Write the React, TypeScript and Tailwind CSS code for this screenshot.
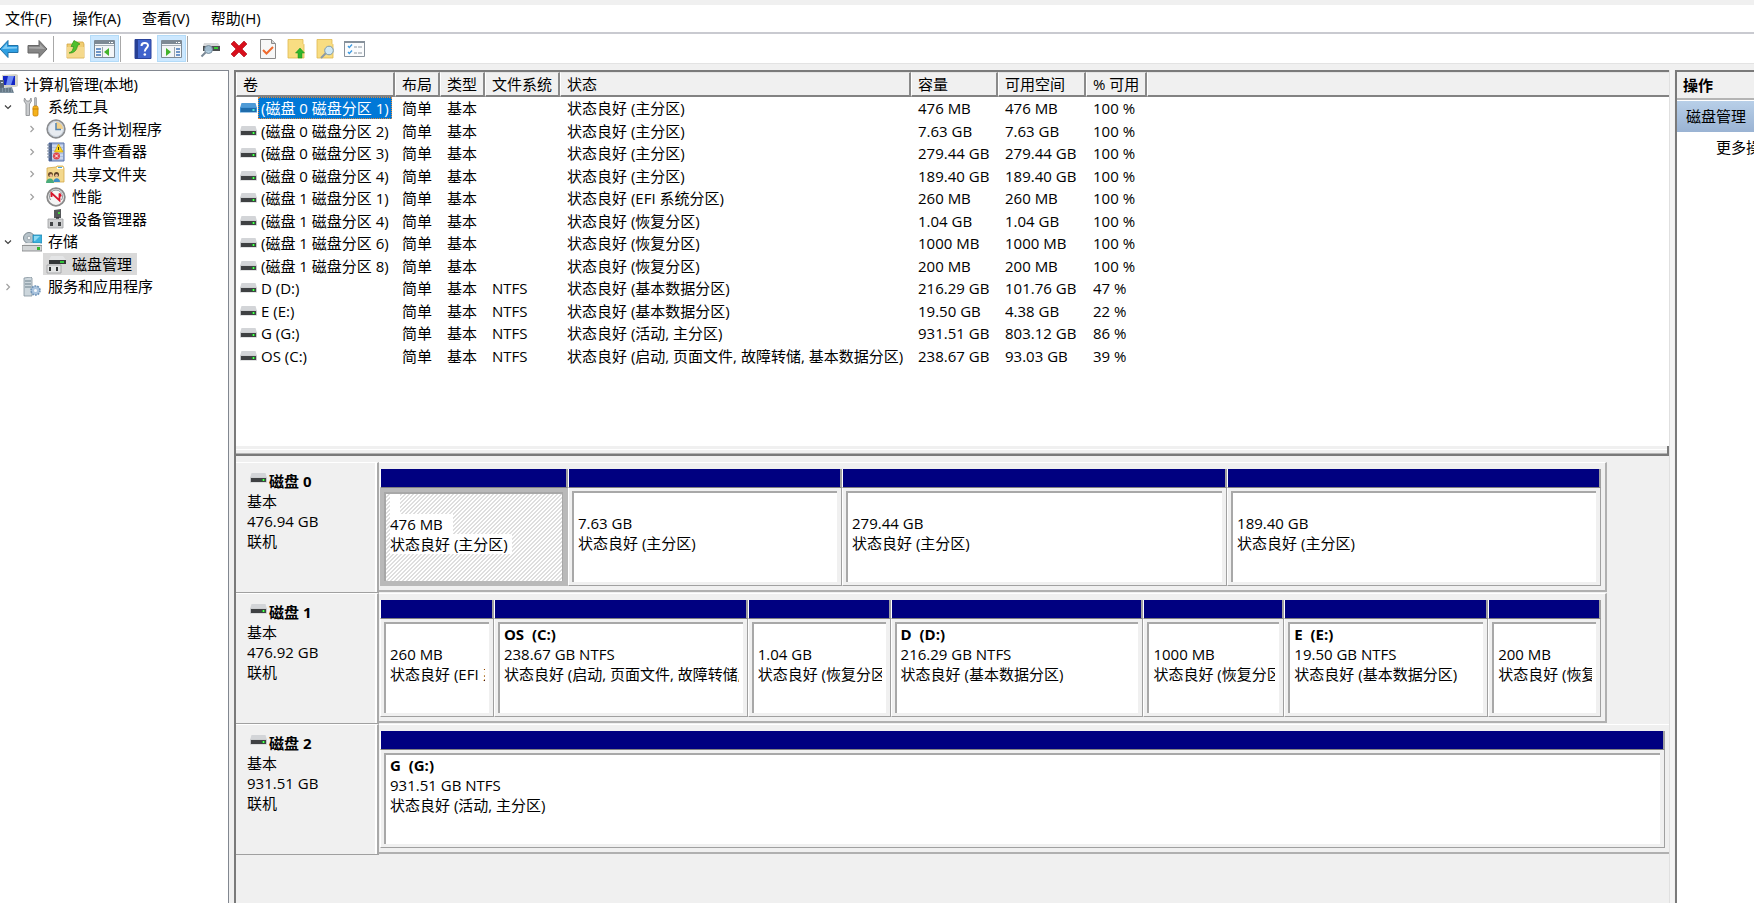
import React from 'react';

interface IVolume {
    name: string;
    fs?: string;
    status: string;
    size: string;
    free: string;
    percent: string;
}

interface IPartition {
    name?: string;
    size: string;
    status: string;
    weight: number;
    selected?: boolean;
}

interface IDisk {
    name: string;
    size: string;
    width: number;
    partitions: IPartition[];
}

interface ITreeItem {
    label: string;
    level: number;
    icon: React.ReactNode;
    arrow?: 'open' | 'closed';
    selected?: boolean;
}

const volumes: IVolume[] = [
    { name: '(磁盘 0 磁盘分区 1)', status: '状态良好 (主分区)', size: '476 MB', free: '476 MB', percent: '100 %' },
    { name: '(磁盘 0 磁盘分区 2)', status: '状态良好 (主分区)', size: '7.63 GB', free: '7.63 GB', percent: '100 %' },
    { name: '(磁盘 0 磁盘分区 3)', status: '状态良好 (主分区)', size: '279.44 GB', free: '279.44 GB', percent: '100 %' },
    { name: '(磁盘 0 磁盘分区 4)', status: '状态良好 (主分区)', size: '189.40 GB', free: '189.40 GB', percent: '100 %' },
    { name: '(磁盘 1 磁盘分区 1)', status: '状态良好 (EFI 系统分区)', size: '260 MB', free: '260 MB', percent: '100 %' },
    { name: '(磁盘 1 磁盘分区 4)', status: '状态良好 (恢复分区)', size: '1.04 GB', free: '1.04 GB', percent: '100 %' },
    { name: '(磁盘 1 磁盘分区 6)', status: '状态良好 (恢复分区)', size: '1000 MB', free: '1000 MB', percent: '100 %' },
    { name: '(磁盘 1 磁盘分区 8)', status: '状态良好 (恢复分区)', size: '200 MB', free: '200 MB', percent: '100 %' },
    { name: 'D (D:)', fs: 'NTFS', status: '状态良好 (基本数据分区)', size: '216.29 GB', free: '101.76 GB', percent: '47 %' },
    { name: 'E (E:)', fs: 'NTFS', status: '状态良好 (基本数据分区)', size: '19.50 GB', free: '4.38 GB', percent: '22 %' },
    { name: 'G (G:)', fs: 'NTFS', status: '状态良好 (活动, 主分区)', size: '931.51 GB', free: '803.12 GB', percent: '86 %' },
    { name: 'OS (C:)', fs: 'NTFS', status: '状态良好 (启动, 页面文件, 故障转储, 基本数据分区)', size: '238.67 GB', free: '93.03 GB', percent: '39 %' },
];

const disks: IDisk[] = [
    {
        name: '磁盘 0',
        size: '476.94 GB',
        width: 95.2,
        partitions: [
            { size: '476 MB', status: '状态良好 (主分区)', weight: 188, selected: true },
            { size: '7.63 GB', status: '状态良好 (主分区)', weight: 274 },
            { size: '279.44 GB', status: '状态良好 (主分区)', weight: 385 },
            { size: '189.40 GB', status: '状态良好 (主分区)', weight: 374 },
        ],
    },
    {
        name: '磁盘 1',
        size: '476.92 GB',
        width: 95.2,
        partitions: [
            { size: '260 MB', status: '状态良好 (EFI 系统分区)', weight: 114 },
            { name: 'OS  (C:)', size: '238.67 GB NTFS', status: '状态良好 (启动, 页面文件, 故障转储, 基本数据分区)', weight: 254 },
            { size: '1.04 GB', status: '状态良好 (恢复分区)', weight: 143 },
            { name: 'D  (D:)', size: '216.29 GB NTFS', status: '状态良好 (基本数据分区)', weight: 253 },
            { size: '1000 MB', status: '状态良好 (恢复分区)', weight: 141 },
            { name: 'E  (E:)', size: '19.50 GB NTFS', status: '状态良好 (基本数据分区)', weight: 204 },
            { size: '200 MB', status: '状态良好 (恢复分区)', weight: 113 },
        ],
    },
    {
        name: '磁盘 2',
        size: '931.51 GB',
        width: 100,
        partitions: [{ name: 'G  (G:)', size: '931.51 GB NTFS', status: '状态良好 (活动, 主分区)', weight: 1 }],
    },
];

const DriveIcon = ({ active }: { active?: boolean }) => (
    <svg width="17" height="10" viewBox="0 0 17 10" className="shrink-0">
        <path d="M1.500 0h14l1.500 5H0z" fill={active ? '#4f9bd6' : '#d3d5d8'} />
        <path d="M0 4.500h17V9.500H0z" fill={active ? '#3c8fd2' : '#c4c6c9'} />
        <path d="M1 5h15v4H1z" fill={active ? '#1f6cab' : '#3f4143'} />
        <path d="M12 6h3v2h-3z" fill={active ? '#2fb5c0' : '#1fa32c'} />
        <path d="M13 6h1v2h-1z" fill={active ? '#5fe0e0' : '#5dff5a'} />
    </svg>
);

const ComputerIcon = () => (
    <svg width="18" height="20" viewBox="0 0 18 20">
        <path d="M2 1l14-1 2 1v11l-2 1H3z" fill="#d4d3c8" />
        <path d="M3 2h12v9H3z" fill="#1426c4" />
        <path d="M8 2h6l-3 9H6z" fill="#6f8cf5" />
        <path d="M0 6h4v8H0z" fill="#596673" />
        <path d="M1 8h2v1H1z" fill="#d6e4ee" />
        <path d="M0 14l12-1 2 6H0z" fill="#8295a3" />
        <path d="M0 15h12M0 17h13" stroke="#4d5f6d" strokeDasharray="2 1" />
    </svg>
);

const ToolsIcon = () => (
    <svg width="20" height="20" viewBox="0 0 20 20">
        <path d="M2.500 1L2 4l2 3v11.500h3.500V7l2-3-.5-3-1.500 3h-3z" fill="#c9cbcd" stroke="#85888b" strokeWidth=".8" />
        <path d="M12.500 1l1-1 1 1v8h-2z" fill="#b9bcbf" stroke="#84888b" strokeWidth=".6" />
        <rect x="11" y="9" width="5" height="10" rx="1.500" fill="#f4b21c" stroke="#c98206" strokeWidth=".8" />
        <path d="M10.500 12h6" stroke="#c98206" />
    </svg>
);

const ClockIcon = () => (
    <svg width="20" height="20" viewBox="0 0 20 20">
        <circle cx="10" cy="10" r="8.800" fill="#e7ebf0" stroke="#8b8d90" strokeWidth="1.800" />
        <path d="M10 10V2.500a7.500 7.500 0 0 1 7.500 7.500z" fill="#f2d08a" />
        <circle cx="10" cy="10" r="7.500" fill="none" stroke="#c9d2dc" />
        <path d="M10 4v6.500h5" fill="none" stroke="#5383ae" strokeWidth="1.500" />
    </svg>
);

const EventIcon = () => (
    <svg width="20" height="20" viewBox="0 0 20 20">
        <path d="M3 1h15v18H3z" fill="#aebfe0" stroke="#5471ab" />
        <path d="M5 4h12M5 7h12M5 10h12M5 13h12M5 16h12" stroke="#e8effb" />
        <path d="M3 1h3v18H3z" fill="#4a6290" />
        <path d="M1 3h3M1 6h3M1 9h3M1 12h3M1 15h3" stroke="#7d8897" />
        <path d="M12.500 2l4.500 8H8.500z" fill="#ffd91f" stroke="#d0a307" strokeWidth=".8" />
        <path d="M12.500 5v3" stroke="#4a3b00" />
        <circle cx="10.500" cy="14" r="3.500" fill="#e0454d" />
        <path d="M9 12.500l3 3M12 12.500l-3 3" stroke="#fff" />
    </svg>
);

const SharedIcon = () => (
    <svg width="20" height="20" viewBox="0 0 20 20">
        <path d="M1 4l9-1 1-1h6l1 2v14H1z" fill="#f3d88d" stroke="#d3a949" strokeWidth=".8" />
        <path d="M11 3h6v2h-6z" fill="#fff" />
        <path d="M12 3.500h4" stroke="#49a5db" />
        <circle cx="4.500" cy="10.500" r="2.500" fill="#6d4c2c" />
        <circle cx="10.500" cy="10.500" r="2.500" fill="#5b4228" />
        <circle cx="5" cy="11.500" r="1.500" fill="#eec09a" />
        <circle cx="10.500" cy="11.500" r="1.500" fill="#eec09a" />
        <path d="M0 19c0-6 8-6 8 0z" fill="#49ac7b" />
        <path d="M7.500 18c0-5 6.500-5 6.500 0z" fill="#3d8fc7" />
    </svg>
);

const PerfIcon = () => (
    <svg width="20" height="20" viewBox="0 0 20 20">
        <circle cx="10" cy="10" r="8.800" fill="#f4f4f4" stroke="#8a8a8a" strokeWidth="1.800" />
        <path d="M4.500 13a6.500 6.500 0 1 1 11 0" fill="none" stroke="#8b9195" />
        <path d="M5.500 10V6l8 7.500V6.500l1.500 3" fill="none" stroke="#d7142a" strokeWidth="1.800" />
    </svg>
);

const DeviceIcon = () => (
    <svg width="20" height="20" viewBox="0 0 20 20">
        <path d="M8 1l7-1v9H8z" fill="#55585a" />
        <path d="M12 3h2v2h-2z" fill="#46d33f" />
        <path d="M10 8h3v4h-3z" fill="#3a3c3e" />
        <path d="M2 10h15v9H2z" fill="#d2d3d4" stroke="#9a9c9e" strokeWidth=".8" />
        <path d="M4 13h3v4H4zM12 13h3v4h-3z" fill="#434547" />
    </svg>
);

const StorageIcon = () => (
    <svg width="20" height="20" viewBox="0 0 20 20">
        <circle cx="7" cy="6" r="5.500" fill="#b7c3ca" stroke="#7e8b93" />
        <circle cx="7" cy="6" r="1.800" fill="#f2f5f6" stroke="#7e8b93" strokeWidth=".6" />
        <path d="M11 3h9v8h-9z" fill="#3db1dd" stroke="#2286b3" strokeWidth=".8" />
        <path d="M12 4h6l-5 5h-1z" fill="#8cd9f3" />
        <path d="M3 11h15l2 3H0z" fill="#eceded" />
        <path d="M0 13.500h20V19H0z" fill="#d2d5d6" stroke="#7c7f80" strokeWidth=".8" />
        <path d="M15 15h3v3h-3z" fill="#34b32c" />
    </svg>
);

const DiskMgmtIcon = () => (
    <svg width="20" height="20" viewBox="0 0 20 20">
        <path d="M5 2h12l3 4H3z" fill="#e4e5e6" />
        <path d="M3 6h17v4H3z" fill="#343637" />
        <path d="M14 7h4v2h-4z" fill="#31c43a" />
        <path d="M1 11h14v8H1z" fill="#e2e3e3" stroke="#9c9d9e" strokeWidth=".8" />
        <path d="M3 13h2v4H3zM10 13h2v4h-2z" fill="#333536" />
    </svg>
);

const ServicesIcon = () => (
    <svg width="20" height="20" viewBox="0 0 20 20">
        <path d="M2 1l7-1 1 1v18H2z" fill="#ccd6dc" stroke="#83929c" strokeWidth=".8" />
        <path d="M3 4h6M3 7h6M3 10h6" stroke="#6d808c" />
        <circle cx="13.500" cy="13.500" r="4.500" fill="#a9c3de" stroke="#6f94b8" strokeWidth="1.600" strokeDasharray="1.800 1" />
        <circle cx="13.500" cy="13.500" r="1.500" fill="#f7fafc" />
    </svg>
);

const BackIcon = () => (
    <svg width="19" height="20" viewBox="0 0 19 20">
        <path d="M0 10l8-8.500v5h10v7H8v5z" fill="#2f9fe2" stroke="#2172a8" />
        <path d="M2 10l5-5.500V8h10v1.500z" fill="#7fccf5" />
    </svg>
);

const ForwardIcon = () => (
    <svg width="21" height="20" viewBox="0 0 21 20">
        <path d="M20 10l-8-8.500v5H1V14h11v4.500z" fill="#858585" stroke="#676767" />
        <path d="M18 10l-5-5v3H2v1.500z" fill="#a8a8a8" />
    </svg>
);

const FolderUpIcon = () => (
    <svg width="20" height="20" viewBox="0 0 20 20">
        <path d="M1 5h8l1-2h7l1 2v14H1z" fill="#f0cd72" stroke="#d2a541" strokeWidth=".8" />
        <path d="M1 8h17v10.500H1z" fill="#f5d98c" />
        <path d="M3 14c3-1 4-3 4.500-6.500H5l3-6 6 3.500-2.500 1.500C11 11 8 14.500 3 14z" fill="#4fc02d" stroke="#2f941a" strokeWidth=".7" />
    </svg>
);

const WindowIcon = ({ right }: { right?: boolean }) => (
    <svg width="21" height="18" viewBox="0 0 21 18">
        <path d="M.5.5h20v17H.5z" fill="#f4f6f8" stroke="#7e8a95" />
        <path d="M1 1h19v3H1z" fill="#7d8994" />
        <path d="M15 2.500h1M17 2.500h2" stroke="#fff" />
        <path d="M1 5.500h19" stroke="#a8b0b8" />
        <path d={right ? 'M13.500 7v10' : 'M8.500 7v10'} stroke="#9aa4ad" />
        <path d={right ? 'M15 9h4M15 12h4M15 15h4' : 'M2 9h5M2 12h5M2 15h5'} stroke="#4177b8" strokeWidth="1.300" />
        <path d={right ? 'M5 8l5 4-5 4z' : 'M15 8l-5 4 5 4z'} fill="#43b32a" />
    </svg>
);

const HelpIcon = () => (
    <svg width="18" height="20" viewBox="0 0 18 20">
        <path d="M1 .5h16v19H1z" fill="#3f63cc" stroke="#2a439c" />
        <path d="M1 .5h3v19H1z" fill="#263f94" />
        <path d="M7.500 7c0-4 6.500-4 6.500-.5 0 2.500-3.200 2.500-3.200 6" fill="none" stroke="#fff" strokeWidth="2" />
        <circle cx="10.800" cy="15.500" r="1.300" fill="#fff" />
    </svg>
);

const RescanIcon = () => (
    <svg width="20" height="20" viewBox="0 0 20 20">
        <path d="M4 4h14l2 3H3z" fill="#d5d7d9" />
        <path d="M3 7h17v5H3z" fill="#4b4e50" />
        <path d="M14 8h4v2h-4z" fill="#38c936" />
        <circle cx="8.500" cy="10.500" r="4" fill="#a9c6da" fillOpacity=".9" stroke="#778b9a" />
        <path d="M5.500 13.500l-4 4" stroke="#7a8794" strokeWidth="2" />
    </svg>
);

const DeleteIcon = () => (
    <svg width="18" height="18" viewBox="0 0 18 18">
        <path d="M4 1l5 5 5-5 3 3-5 5 5 5-3 3-5-5-5 5-3-3 5-5-5-5z" fill="#d80f1c" stroke="#a80812" strokeWidth=".6" />
    </svg>
);

const CheckDocIcon = () => (
    <svg width="16" height="20" viewBox="0 0 16 20">
        <path d="M.5.5h11l4 4v15H.5z" fill="#f7f7f7" stroke="#8b8b8b" />
        <path d="M11.500.5v4h4" fill="#d5d5d5" stroke="#8b8b8b" />
        <path d="M3 11l3.500 3.500L13 8" fill="none" stroke="#ef6a2d" strokeWidth="2" />
    </svg>
);

const NoteIcon = ({ search }: { search?: boolean }) => (
    <svg width="19" height="20" viewBox="0 0 19 20">
        <path d="M1 .5h15v4l1 1v13.500H1z" fill="#f8dd82" stroke="#dfb94f" strokeWidth=".8" />
        {search ? (
            <>
                <path d="M10 14l-5 5" stroke="#8b99a5" strokeWidth="2" />
                <circle cx="13" cy="11.500" r="4.300" fill="#cfe8f4" stroke="#7d9aae" />
            </>
        ) : (
            <path d="M13 9l4.500 5H15v5h-4v-5H8.500z" fill="#2eb52c" stroke="#149018" strokeWidth=".5" />
        )}
    </svg>
);

const ListIcon = () => (
    <svg width="21" height="16" viewBox="0 0 21 16">
        <path d="M.5.500h20v15H.5z" fill="#fbfcfd" stroke="#87919b" />
        <path d="M0 0h21v2H0z" fill="#87919b" />
        <path d="M4 5l1.300 1.500L8 3.500M4 11l1.300 1.500L8 9.500" fill="none" stroke="#3e9ae0" strokeWidth="1.300" />
        <path d="M10 6h3M14 6h4M10 12h3M14 12h4" stroke="#8c97a2" />
    </svg>
);

const tree: ITreeItem[] = [
    { label: '计算机管理(本地)', level: 0, icon: <ComputerIcon /> },
    { label: '系统工具', level: 1, icon: <ToolsIcon />, arrow: 'open' },
    { label: '任务计划程序', level: 2, icon: <ClockIcon />, arrow: 'closed' },
    { label: '事件查看器', level: 2, icon: <EventIcon />, arrow: 'closed' },
    { label: '共享文件夹', level: 2, icon: <SharedIcon />, arrow: 'closed' },
    { label: '性能', level: 2, icon: <PerfIcon />, arrow: 'closed' },
    { label: '设备管理器', level: 2, icon: <DeviceIcon /> },
    { label: '存储', level: 1, icon: <StorageIcon />, arrow: 'open' },
    { label: '磁盘管理', level: 2, icon: <DiskMgmtIcon />, selected: true },
    { label: '服务和应用程序', level: 1, icon: <ServicesIcon />, arrow: 'closed' },
];

const Arrow = ({ type }: { type?: 'open' | 'closed' }) => {
    if (!type) return <span className="w-4 shrink-0" />;
    return (
        <button type="button" aria-label={type === 'open' ? '折叠' : '展开'} className="flex w-4 shrink-0 justify-center">
            <svg width="8" height="8" viewBox="0 0 8 8" fill="none">
                {type === 'open' ? (
                    <path d="M1 2.500l3 3 3-3" stroke="#404040" strokeWidth="1.200" />
                ) : (
                    <path d="M2.500 1l3 3-3 3" stroke="#a0a0a0" strokeWidth="1.200" />
                )}
            </svg>
        </button>
    );
};

const ToolButton = ({ label, active, children }: { label: string; active?: boolean; children: React.ReactNode }) => (
    <button
        type="button"
        aria-label={label}
        className={`flex h-[27px] w-[29px] shrink-0 items-center justify-center ${active ? 'border border-[#b3dbf8] bg-[#cce8ff]' : ''}`}
    >
        {children}
    </button>
);

const Separator = () => <span className="ml-px mr-[7px] h-[26px] w-px shrink-0 bg-[#a8a8a8]" />;

const Toolbar = () => (
    <div className="flex items-center border-b border-[#e3e3e3] bg-white py-px">
        <button type="button" aria-label="后退" className="w-[23px] shrink-0">
            <BackIcon />
        </button>
        <ToolButton label="前进"><ForwardIcon /></ToolButton>
        <Separator />
        <ToolButton label="向上一级"><FolderUpIcon /></ToolButton>
        <ToolButton label="显示/隐藏控制台树" active><WindowIcon /></ToolButton>
        <Separator />
        <ToolButton label="帮助"><HelpIcon /></ToolButton>
        <ToolButton label="显示/隐藏操作窗格" active><WindowIcon right /></ToolButton>
        <Separator />
        <ToolButton label="重新扫描磁盘"><RescanIcon /></ToolButton>
        <ToolButton label="删除"><DeleteIcon /></ToolButton>
        <ToolButton label="属性"><CheckDocIcon /></ToolButton>
        <ToolButton label="打开"><NoteIcon /></ToolButton>
        <ToolButton label="浏览"><NoteIcon search /></ToolButton>
        <ToolButton label="设置"><ListIcon /></ToolButton>
    </div>
);

const SideTree = () => (
    <aside className="w-[229px] shrink-0 border-t border-r border-[#828790] bg-white pt-[2px]">
        <ul>
            {tree.map((item) => (
                <li
                    key={item.label}
                    className={`flex h-[22px] items-center even:h-[23px] ${item.level === 2 ? 'pl-6' : ''}`}
                >
                    {item.level > 0 && <Arrow type={item.arrow} />}
                    <span
                        className={`flex h-[22px] items-center gap-[6px] pr-[5px] ${item.level > 0 ? 'ml-[3px] pl-[3px]' : ''} ${item.selected ? 'bg-[#d9d9d9]' : ''}`}
                    >
                        {item.icon}
                        {item.label}
                    </span>
                </li>
            ))}
        </ul>
    </aside>
);

const headers = ['卷', '布局', '类型', '文件系统', '状态', '容量', '可用空间', '% 可用', ''];

const VolumeTable = () => (
    <div className="h-[374px] shrink-0 overflow-hidden bg-white">
        <table className="w-full table-fixed border-collapse text-left leading-5">
            <colgroup>
                <col className="w-[159px]" />
                <col className="w-[45px]" />
                <col className="w-[45px]" />
                <col className="w-[75px]" />
                <col className="w-[351px]" />
                <col className="w-[87px]" />
                <col className="w-[88px]" />
                <col className="w-[61px]" />
                <col />
            </colgroup>
            <thead>
                <tr>
                    {headers.map((h) => (
                        <th key={h} className="h-[25px] p-0 font-normal">
                            <div
                                className={`flex h-[25px] items-center border-t border-b-2 border-l border-t-[#e3e3e3] border-b-[#828282] border-l-white bg-[#f0f0f0] pl-[6px] ${h ? 'border-r-2 border-r-[#8a8a8a]' : ''}`}
                            >
                                {h}
                            </div>
                        </th>
                    ))}
                </tr>
            </thead>
            <tbody>
                {volumes.map((v, i) => (
                    <tr key={v.name} className="h-[22px] whitespace-nowrap even:h-[23px]">
                        <td className="p-0">
                            <div className="flex items-center gap-px pl-1">
                                <DriveIcon active={i === 0} />
                                <span
                                    className={`border px-[2px] ${i === 0 ? 'border-dotted border-[#e08a3c] bg-[#0078d7] text-white' : 'border-transparent'}`}
                                >
                                    {v.name}
                                </span>
                            </div>
                        </td>
                        <td className="p-0 pl-[7px]">简单</td>
                        <td className="p-0 pl-[7px]">基本</td>
                        <td className="p-0 pl-[7px]">{v.fs}</td>
                        <td className="p-0 pl-[7px]">{v.status}</td>
                        <td className="p-0 pl-[7px]">{v.size}</td>
                        <td className="p-0 pl-[7px]">{v.free}</td>
                        <td className="p-0 pl-[7px]">{v.percent}</td>
                        <td className="p-0" />
                    </tr>
                ))}
            </tbody>
        </table>
    </div>
);

const Partition = ({ part }: { part: IPartition }) => (
    <div className="flex min-w-0 basis-0 flex-col" style={{ flexGrow: part.weight }}>
        <div className="h-[19px] border-r-2 border-b border-l border-r-[#a0a0a0] border-b-[#808080] border-l-white bg-[#000080]" />
        <div
            className={`flex-1 border-r border-b ${part.selected ? 'border-[#b9b9b9] bg-[#b9b9b9] p-1' : 'border-r-[#a0a0a0] border-b-[#a0a0a0] border-l border-l-white p-[3px] pr-1'}`}
        >
            <div
                className={`h-full border-t-2 border-l-2 border-[#a8a8a8] px-1 ${part.selected ? 'border-r bg-white bg-[linear-gradient(135deg,#fff_36%,#dedede_36%,#dedede_50%,#fff_50%,#fff_86%,#dedede_86%)] bg-[length:4px_4px]' : 'bg-white'}`}
            >
                <div className="overflow-hidden whitespace-pre leading-5">
                    <p className="h-5 font-bold">
                        {part.selected ? <span className="inline-block h-5 w-[10px] bg-white" /> : part.name}
                    </p>
                    <p><span className={part.selected ? 'inline-block bg-white pr-[10px]' : ''}>{part.size}</span></p>
                    <p><span className={part.selected ? 'inline-block bg-white pr-1' : ''}>{part.status}</span></p>
                </div>
            </div>
        </div>
    </div>
);

const DiskRow = ({ disk }: { disk: IDisk }) => (
    <div className="flex h-[131px]">
        <div className="w-[143px] shrink-0 border-t border-r-2 border-b border-t-white border-r-[#a8a8a8] border-b-[#a0a0a0]">
            <div className="h-full border-r-2 border-white pt-2 pl-[11px] leading-5">
                <p className="flex gap-[2px] pl-[3px] font-bold">
                    <span className="pt-[2px]"><DriveIcon /></span>
                    {disk.name}
                </p>
                <p>基本</p>
                <p>{disk.size}</p>
                <p>联机</p>
            </div>
        </div>
        <div className="min-w-0 flex-1">
            <div
                className={`flex h-[130px] border-t border-b-2 border-t-white border-b-[#b0b0b0] pt-[6px] pb-1 pl-px pr-1 ${disk.width < 100 ? 'border-r-2 border-r-[#b0b0b0]' : ''}`}
                style={{ width: `${disk.width}%` }}
            >
                {disk.partitions.map((part) => (
                    <Partition key={part.size + part.status} part={part} />
                ))}
            </div>
        </div>
    </div>
);

const Actions = () => (
    <aside className="w-[79px] shrink-0 overflow-hidden border-t-2 border-l-2 border-[#7a7a7a] bg-white whitespace-nowrap">
        <h2 className="border-b-2 border-[#b4b4b4] bg-[#f0f0f0] pl-[6px] font-bold leading-[26px]">操作</h2>
        <div className="mt-px bg-linear-to-b from-[#b8cfe8] to-[#9ab3d3] pl-[9px] leading-[31px]">磁盘管理</div>
        <a href="#more" className="block pl-[39px] leading-[30px]">更多操作</a>
    </aside>
);

const App = () => {
    return (
        <div className="flex h-screen flex-col overflow-hidden bg-[#f0f0f0] font-['Open_Sans','Noto_Sans_CJK_SC',sans-serif] text-[15px] text-black">
            <nav className="mt-[5px] flex gap-[21px] border-b-2 border-[#c9cad0] bg-white pl-[5px] leading-[27px]">
                <button type="button">文件(F)</button>
                <button type="button">操作(A)</button>
                <button type="button">查看(V)</button>
                <button type="button">帮助(H)</button>
            </nav>
            <Toolbar />
            <div className="flex min-h-0 flex-1 pt-[6px]">
                <SideTree />
                <main className="ml-[5px] flex min-w-0 flex-1 flex-col border-t-2 border-l-2 border-[#7a7a7a]">
                    <VolumeTable />
                    <div className="mb-[6px] flex h-[10px] shrink-0 flex-col border-r-2 border-b-2 border-[#7a7a7a] pt-[3px]">
                        <div className="flex-1 border-t border-b border-t-white border-b-[#b4b4b4]" />
                    </div>
                    {disks.map((disk) => (
                        <DiskRow key={disk.name} disk={disk} />
                    ))}
                </main>
                <div className="mr-px w-[5px] shrink-0 border-l border-[#e0e0e0] bg-[#f4f4f4]" />
                <Actions />
            </div>
        </div>
    );
};

export default App;
